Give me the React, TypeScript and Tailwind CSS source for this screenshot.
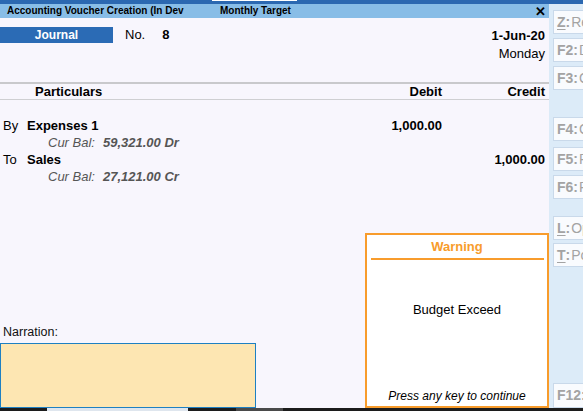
import React from "react";

const keys: { k: string; l: string; ul?: boolean; mt: string }[] = [
  { k: "Z", l: "Related Reports", ul: true, mt: "mt-[6px]" },
  { k: "F2", l: "Date", mt: "mt-[4px]" },
  { k: "F3", l: "Company", mt: "mt-[4px]" },
  { k: "F4", l: "Contra", mt: "mt-[27px]" },
  { k: "F5", l: "Payment", mt: "mt-[6px]" },
  { k: "F6", l: "Receipt", mt: "mt-[4px]" },
  { k: "L", l: "Optional", ul: true, mt: "mt-[17px]" },
  { k: "T", l: "Post-Dated", ul: true, mt: "mt-[3px]" },
];

function Key({ k, l, ul, mt }: { k: string; l: string; ul?: boolean; mt: string }) {
  return (
    <div
      className={`${mt} ml-[4px] h-[24px] w-[60px] shrink-0 flex items-center pl-[3px] bg-[#f9fbfe] border border-[#c9d9ea] text-[14px] text-[#a3a3a3] whitespace-nowrap overflow-hidden`}
    >
      <span className={`font-bold ${ul ? "underline underline-offset-2 decoration-1" : ""}`}>{k}</span>
      <span className="font-bold">:</span>
      <span className="ml-[1px]">{l}</span>
    </div>
  );
}

export default function App() {
  return (
    <div className="w-[583px] h-[411px] overflow-hidden flex flex-col font-['Liberation_Sans',Arial,sans-serif] text-black bg-[#f8f6fd]">
      {/* top dark bar */}
      <div className="h-[4px] bg-[#2b68b1] flex items-start">
        <div className="ml-[212px] w-[85px] h-[1px] bg-white" />
      </div>
      <div className="flex-1 flex min-h-0">
        {/* left column */}
        <div className="w-[549px] flex flex-col relative">
          <div className="h-[14px] bg-[#88bde7] flex items-center text-[10px] font-bold leading-none relative">
            <span className="ml-[7px] w-[213px]">Accounting Voucher Creation (In Dev</span>
            <span>Monthly Target</span>
            <span className="ml-auto mr-[3px] text-[13px] leading-none">✕</span>
          </div>
          <div className="flex-1 flex flex-col bg-[#f8f6fd]">
            {/* voucher header */}
            <div className="h-[64px] flex justify-between">
              <div className="mt-[9px] h-[16px] flex items-center">
                <div className="w-[113px] h-[16px] bg-[#2b6bb5] text-white font-bold text-[12px] flex items-center justify-center">
                  Journal
                </div>
                <span className="ml-[12px] text-[13px]">No.</span>
                <span className="ml-[17px] text-[13px] font-bold">8</span>
              </div>
              <div className="mt-[9px] pr-[4px] flex flex-col items-end text-[13px] leading-[17px]">
                <span className="font-bold">1-Jun-20</span>
                <span className="mt-[1px]">Monday</span>
              </div>
            </div>
            {/* column header */}
            <div className="h-[2px] bg-[#c9c9cc]" />
            <div className="h-[16px] flex items-center text-[13px] font-bold leading-none border-b border-[#cfcfd2]">
              <span className="pl-[35px] flex-1">Particulars</span>
              <span className="w-[80px] text-right">Debit</span>
              <span className="w-[107px] pr-[4px] text-right">Credit</span>
            </div>
            {/* entries */}
            <div className="mt-[17px] text-[13px] leading-[17px]">
              <div className="flex">
                <span className="pl-[3px] w-[27px]">By</span>
                <span className="font-bold flex-1">Expenses 1</span>
                <span className="w-[80px] text-right font-bold">1,000.00</span>
                <span className="w-[107px]" />
              </div>
              <div className="pl-[48px] italic text-[#555]">
                Cur Bal:<span className="ml-[8px] font-bold">59,321.00 Dr</span>
              </div>
              <div className="flex">
                <span className="pl-[3px] w-[27px]">To</span>
                <span className="font-bold flex-1">Sales</span>
                <span className="w-[80px]" />
                <span className="w-[107px] pr-[4px] text-right font-bold">1,000.00</span>
              </div>
              <div className="pl-[48px] italic text-[#555]">
                Cur Bal:<span className="ml-[8px] font-bold">27,121.00 Cr</span>
              </div>
            </div>
            {/* narration */}
            <div className="mt-auto">
              <div className="pl-[3px] text-[12.5px] leading-[17px] text-[#111]">Narration:</div>
              <div className="mt-[2px] w-[256px] h-[65px] bg-[#fde6b2] border border-[#1e80c2]" />
            </div>
          </div>
          {/* warning dialog */}
          <div className="absolute left-[365px] top-[229px] w-[184px] h-[175px] bg-white border-2 border-[#f89c2c] flex flex-col items-center">
            <div className="mt-[4px] text-[13px] font-bold text-[#f89c2c] leading-[16px]">Warning</div>
            <div className="mt-[3px] w-[173px] h-[2px] bg-[#f89c2c]" />
            <div className="mt-[42px] text-[13px] leading-[16px]">Budget Exceed</div>
            <div className="mt-auto mb-[2px] text-[12px] italic leading-[16px]">Press any key to continue</div>
          </div>
        </div>
        {/* right button panel */}
        <div className="flex-1 bg-[#dcebf8] flex flex-col overflow-hidden">
          {keys.map((x) => (
            <Key key={x.k} {...x} />
          ))}
          <div className="mt-auto ml-[4px] h-[25px] w-[60px] flex items-center pl-[3px] bg-[#f9fbfe] border border-[#c9d9ea] text-[14px] text-[#a3a3a3] font-bold whitespace-nowrap">
            F12: Configure
          </div>
        </div>
      </div>
      {/* bottom strip */}
      <div className="h-[3px] flex">
        <div className="w-[47px] bg-[#1c1c1c]" />
        <div className="w-[141px] bg-[#dfe6ee]" />
        <div className="w-[48px] bg-[#1c1c1c]" />
        <div className="w-[47px] bg-[#4a4a4a]" />
        <div className="flex-1 bg-[#1c1c1c]" />
      </div>
    </div>
  );
}
